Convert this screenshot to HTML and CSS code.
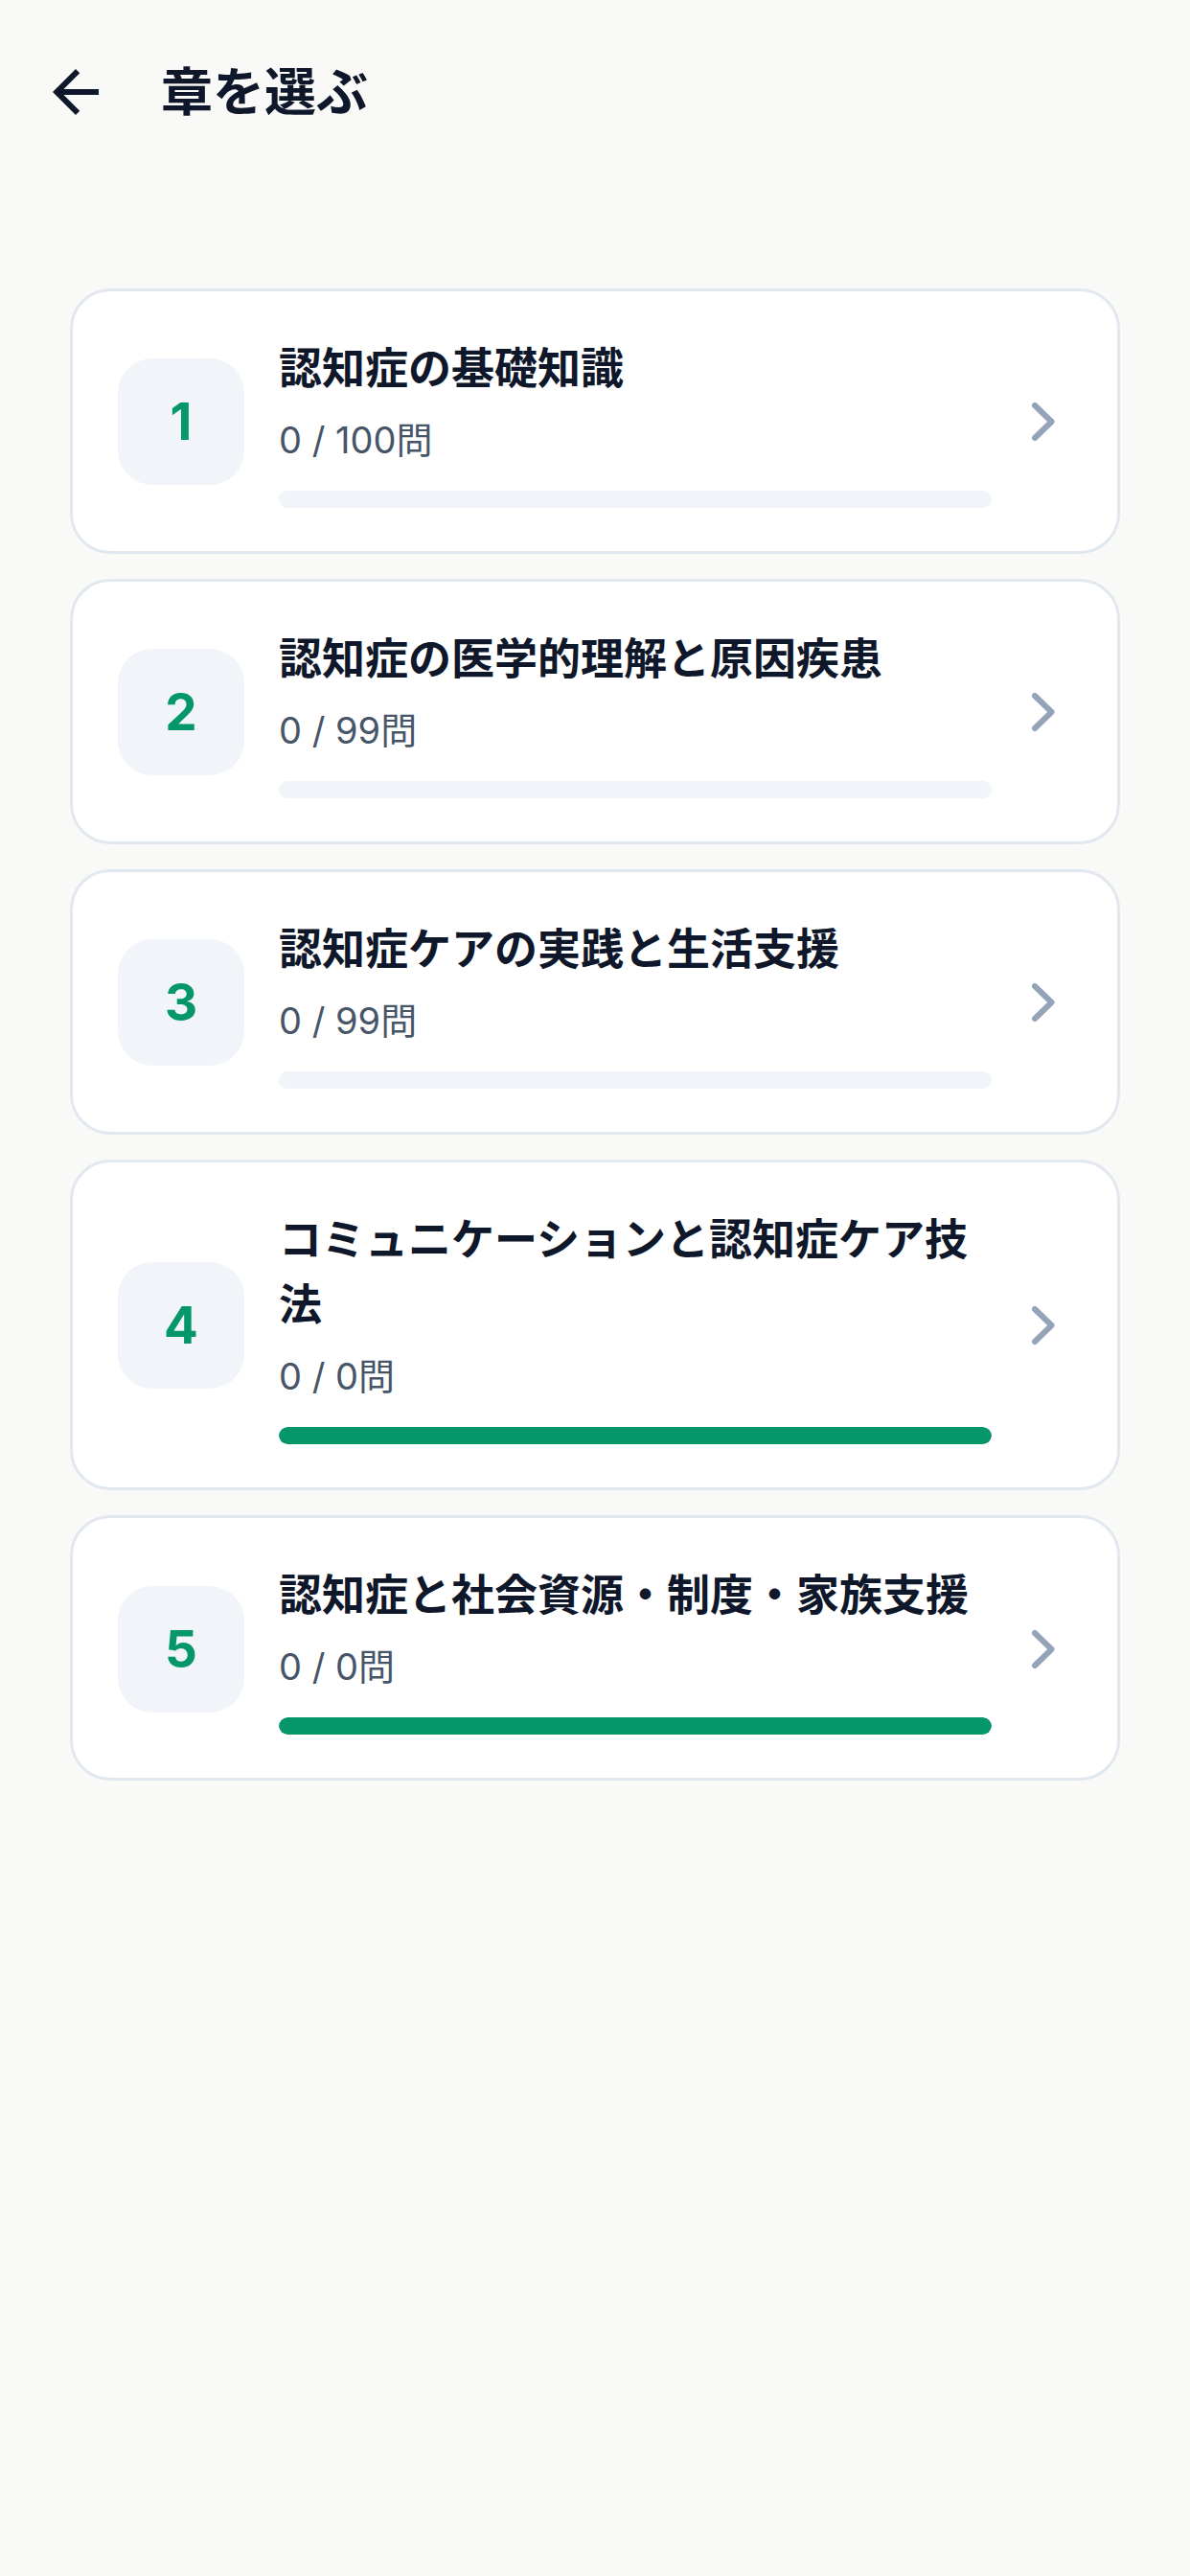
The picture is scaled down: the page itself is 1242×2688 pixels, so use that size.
FILE: index.html
```html
<!DOCTYPE html>
<html lang="ja">
<head>
  <meta charset="UTF-8" />
  <title>章を選ぶ</title>
  <link rel="stylesheet" href="styles.css">
</head>
<body>

  <header class="top-bar">
    <button class="back-btn" type="button" aria-label="戻る">
      <svg viewBox="0 0 24 24" width="72" height="72">
        <path d="M20 11H7.83l5.59-5.59L12 4l-8 8 8 8 1.41-1.41L7.83 13H20v-2z" fill="#0f172a"/>
      </svg>
    </button>
    <h1>章を選ぶ</h1>
  </header>

  <main class="chapter-list">

    <div class="chapter-card">
      <div class="chapter-num">1</div>
      <div class="chapter-body">
        <div class="chapter-title">認知症の基礎知識</div>
        <div class="chapter-count">0 / 100問</div>
        <div class="progress"><div class="progress-fill" style="width: 0%"></div></div>
      </div>
      <svg class="chevron" viewBox="0 0 24 40" width="24" height="40">
        <polyline points="3,3 20.5,20 3,37" />
      </svg>
    </div>

    <div class="chapter-card">
      <div class="chapter-num">2</div>
      <div class="chapter-body">
        <div class="chapter-title">認知症の医学的理解と原因疾患</div>
        <div class="chapter-count">0 / 99問</div>
        <div class="progress"><div class="progress-fill" style="width: 0%"></div></div>
      </div>
      <svg class="chevron" viewBox="0 0 24 40" width="24" height="40">
        <polyline points="3,3 20.5,20 3,37" />
      </svg>
    </div>

    <div class="chapter-card">
      <div class="chapter-num">3</div>
      <div class="chapter-body">
        <div class="chapter-title">認知症ケアの実践と生活支援</div>
        <div class="chapter-count">0 / 99問</div>
        <div class="progress"><div class="progress-fill" style="width: 0%"></div></div>
      </div>
      <svg class="chevron" viewBox="0 0 24 40" width="24" height="40">
        <polyline points="3,3 20.5,20 3,37" />
      </svg>
    </div>

    <div class="chapter-card">
      <div class="chapter-num">4</div>
      <div class="chapter-body">
        <div class="chapter-title">コミュニケーションと認知症ケア技法</div>
        <div class="chapter-count">0 / 0問</div>
        <div class="progress"><div class="progress-fill" style="width: 100%"></div></div>
      </div>
      <svg class="chevron" viewBox="0 0 24 40" width="24" height="40">
        <polyline points="3,3 20.5,20 3,37" />
      </svg>
    </div>

    <div class="chapter-card">
      <div class="chapter-num">5</div>
      <div class="chapter-body">
        <div class="chapter-title">認知症と社会資源・制度・家族支援</div>
        <div class="chapter-count">0 / 0問</div>
        <div class="progress"><div class="progress-fill" style="width: 100%"></div></div>
      </div>
      <svg class="chevron" viewBox="0 0 24 40" width="24" height="40">
        <polyline points="3,3 20.5,20 3,37" />
      </svg>
    </div>

  </main>

</body>
</html>
```

FILE: styles.css
```css
html, body {
  margin: 0;
  padding: 0;
  background-color: #f9f9f7;
  font-family: 'Inter', 'Noto Sans CJK JP', sans-serif;
  color: #0f172a;
}

body {
  min-height: 100vh;
}

.top-bar {
  display: flex;
  align-items: center;
  gap: 53px;
  height: 72px;
  padding: 60px 0 0 43px;
}

.back-btn {
  display: flex;
  width: 72px;
  height: 72px;
  padding: 0;
  border: none;
  background: none;
  cursor: pointer;
}

.top-bar h1 {
  margin: 0 0 6px;
  font-family: 'Noto Sans CJK JP', sans-serif;
  font-size: 54px;
  font-weight: 700;
  line-height: 1;
  color: #0f172a;
}

.chapter-list {
  display: flex;
  flex-direction: column;
  gap: 26px;
  margin-top: 169px;
  padding: 0 73px;
}

.chapter-card {
  display: flex;
  align-items: center;
  gap: 36px;
  background-color: white;
  border: 3px solid #e2e8f0;
  border-radius: 42px;
  padding: 47px 65px 45px 47px;
}

.chapter-num {
  flex: 0 0 132px;
  height: 132px;
  display: flex;
  align-items: center;
  justify-content: center;
  background-color: #f1f5f9;
  border-radius: 36px;
  font-size: 53px;
  font-weight: 700;
  color: #059669;
}

.chapter-body {
  flex: 1;
  min-width: 0;
}

.chapter-title {
  font-size: 45px;
  font-weight: 700;
  line-height: 1.53;
  color: #0f172a;
}

.chapter-count {
  margin-top: 11px;
  font-size: 38px;
  line-height: 1.5;
  color: #475569;
}

.progress {
  margin-top: 24px;
  height: 18px;
  background-color: #f1f5f9;
  border-radius: 9px;
  overflow: hidden;
}

.progress-fill {
  height: 100%;
  background-color: #059669;
  border-radius: 9px;
}

.chevron {
  flex: 0 0 24px;
  margin-left: 6px;
  fill: none;
  stroke: #94a3b8;
  stroke-width: 6;
  stroke-linecap: round;
  stroke-linejoin: round;
}
```
